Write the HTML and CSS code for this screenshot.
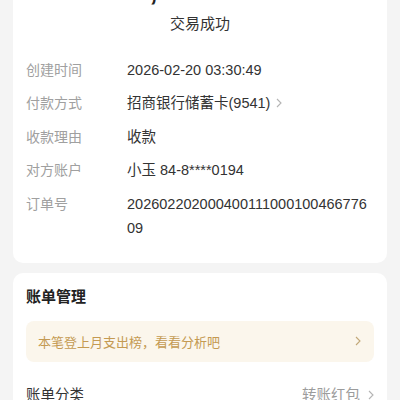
FILE: index.html
```html
<!DOCTYPE html>
<html lang="zh-CN">
<head>
    <meta charset="UTF-8">
    <meta name="viewport" content="width=device-width, initial-scale=1.0">
    <title>账单详情</title>
<link rel="stylesheet" href="styles.css">
</head>
<body>
    <div class="page">
        <div class="card detail">
            <div class="amount">-2,000.00</div>
            <div class="status">交易成功</div>

            <div class="rows">
                <div class="row">
                    <div class="label">创建时间</div>
                    <div class="value">2026-02-20 03:30:49</div>
                </div>
                <div class="row">
                    <div class="label">付款方式</div>
                    <div class="value">招商银行储蓄卡(9541)
                        <svg class="arrow" width="6" height="10" viewBox="0 0 6 10"><path d="M1 1l4 4-4 4" fill="none" stroke="#b4b4b4" stroke-width="1.1"/></svg>
                    </div>
                </div>
                <div class="row">
                    <div class="label">收款理由</div>
                    <div class="value">收款</div>
                </div>
                <div class="row">
                    <div class="label">对方账户</div>
                    <div class="value">小玉 84-8****0194</div>
                </div>
                <div class="row">
                    <div class="label">订单号</div>
                    <div class="value order">20260220200040011100010046677609</div>
                </div>
            </div>
        </div>

        <div class="card manage">
            <div class="title">账单管理</div>
            <div class="tip">
                <span>本笔登上月支出榜，看看分析吧</span>
                <svg width="6" height="10" viewBox="0 0 6 10"><path d="M1 1l4 4-4 4" fill="none" stroke="#c2a878" stroke-width="1.1"/></svg>
            </div>
            <div class="item">
                <span class="item-name">账单分类</span>
                <span class="item-value">转账红包
                    <svg width="6" height="10" viewBox="0 0 6 10"><path d="M1 1l4 4-4 4" fill="none" stroke="#b4b4b4" stroke-width="1.1"/></svg>
                </span>
            </div>
        </div>
    </div>
</body>
</html>
```

FILE: styles.css
```css
body {
    margin: 0;
    background-color: #f4f4f4;
    font-family: "Liberation Sans", "Noto Sans CJK SC", sans-serif;
    color: #333;
}

.page {
    padding: 0 13px;
    display: flex;
    flex-direction: column;
    gap: 10px;
}

.card {
    background: #fff;
    border-radius: 10px;
}

.detail {
    margin-top: -28px;
    padding: 0 13px 18px;
}

.amount {
    height: 42px;
    line-height: 36px;
    padding-right: 28px;
    text-align: center;
    font-size: 30px;
    font-weight: bold;
    color: #222;
}

.status {
    text-align: center;
    font-size: 15px;
    line-height: 20px;
    color: #333;
}

.rows {
    margin-top: 19px;
}

.row {
    display: flex;
    padding: 4.75px 0;
    font-size: 14.5px;
    line-height: 24px;
}

.label {
    width: 101px;
    flex-shrink: 0;
    color: #a0a0a0;
    font-size: 14px;
}

.value {
    flex: 1;
    color: #333;
    display: flex;
    align-items: center;
    gap: 6px;
}

.order {
    display: block;
    word-break: break-all;
}

.manage {
    padding: 14px 13px 20px;
}

.title {
    font-size: 15px;
    font-weight: bold;
    line-height: 20px;
    color: #222;
}

.tip {
    margin-top: 14px;
    height: 41px;
    border-radius: 8px;
    background: #fbf6ec;
    display: flex;
    align-items: center;
    justify-content: space-between;
    padding: 0 13px 0 12px;
    font-size: 13px;
    color: #c49a52;
}

.item {
    margin-top: 23px;
    display: flex;
    justify-content: space-between;
    align-items: center;
    line-height: 20px;
    font-size: 14.5px;
}

.item-name {
    color: #333;
}

.item-value {
    color: #9c9c9c;
    display: flex;
    align-items: center;
    gap: 8px;
}
```
